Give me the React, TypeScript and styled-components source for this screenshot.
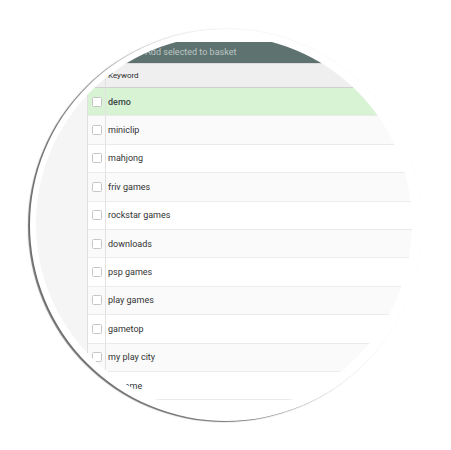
import React from "react";
import styled, { createGlobalStyle } from "styled-components";

const GlobalStyle = createGlobalStyle`
  html, body { margin: 0; padding: 0; background: #ffffff; }
  body { width: 451px; height: 450px; overflow: hidden; font-family: Roboto, "Liberation Sans", Arial, sans-serif; }
  * { box-sizing: border-box; }
`;

const Stage = styled.div`
  position: relative;
  width: 451px;
  height: 450px;
  background: #ffffff;
`;

/* the magnifier disc lying on the empty canvas */
const Disc = styled.div`
  position: absolute;
  left: 30px;
  top: 29px;
  width: 392px;
  height: 392px;
  border-radius: 50%;
  background: #ffffff;
  box-shadow: -2px 1px 1px rgba(0, 0, 0, 0.55), -1px 0 2px rgba(0, 0, 0, 0.1);
  display: flex;
`;

const Lens = styled.div`
  margin: 7px 0 0 6px;
  width: 376px;
  height: 376px;
  border-radius: 50%;
  overflow: hidden;
  background: #ffffff;
  display: flex;
  flex-direction: column;
`;

const TopGap = styled.div`
  height: 6px;
  flex: none;
  background: #ffffff;
`;

const Toolbar = styled.div`
  height: 21px;
  flex: none;
  background: #5e7270;
  color: #bcc6c5;
  font-size: 9px;
  line-height: 21px;
  padding-left: 109px;
  white-space: nowrap;
`;

const Body = styled.div`
  flex: 1;
  display: flex;
  min-height: 0;
`;

const Margin = styled.div`
  width: 51px;
  flex: none;
  background: #f5f5f5;
`;

const Table = styled.div`
  flex: 1;
  display: flex;
  flex-direction: column;
  border-left: 1px solid #e0e0e0;
  background: #ffffff;
`;

const HeadRow = styled.div`
  height: 25px;
  flex: none;
  display: grid;
  grid-template-columns: 18px 1fr;
  background: #efefef;
  border-top: 1px solid #dcdcdc;
  border-bottom: 1px solid #d0d0d0;
`;

const HeadLabel = styled.div`
  font-size: 8px;
  color: #2e2e2e;
  padding-left: 2px;
  display: flex;
  align-items: center;
`;

const Row = styled.div<{ $tone: "hit" | "odd" | "even" }>`
  height: 28.4px;
  flex: none;
  display: grid;
  grid-template-columns: 18px 1fr;
  border-bottom: 1px solid #ebebeb;
  background: ${(p) =>
    p.$tone === "hit" ? "#d8f3d4" : p.$tone === "odd" ? "#fafafa" : "#ffffff"};
`;

const CheckCell = styled.div`
  border-right: 1px solid #e2e2e2;
  display: flex;
  align-items: center;
  justify-content: center;
`;

const Box = styled.span`
  width: 10px;
  height: 10px;
  border: 1px solid #c6c6c6;
  border-radius: 1.5px;
  background: #ffffff;
`;

const Word = styled.div<{ $hit?: boolean }>`
  font-size: 9px;
  color: ${(p) => (p.$hit ? "#3a4746" : "#333333")};
  font-weight: ${(p) => (p.$hit ? 500 : 400)};
  padding-left: 2px;
  display: flex;
  align-items: center;
  white-space: nowrap;
`;

const keywords = [
  "demo",
  "miniclip",
  "mahjong",
  "friv games",
  "rockstar games",
  "downloads",
  "psp games",
  "play games",
  "gametop",
  "my play city",
  "y8 game",
];

export default function App() {
  return (
    <>
      <GlobalStyle />
      <Stage>
        <Disc>
          <Lens>
            <TopGap />
            <Toolbar>Add selected to basket</Toolbar>
            <Body>
              <Margin />
              <Table>
                <HeadRow>
                  <CheckCell />
                  <HeadLabel>Keyword</HeadLabel>
                </HeadRow>
                {keywords.map((k, i) => (
                  <Row key={k} $tone={i === 0 ? "hit" : i % 2 === 1 ? "odd" : "even"}>
                    <CheckCell>
                      <Box />
                    </CheckCell>
                    <Word $hit={i === 0}>{k}</Word>
                  </Row>
                ))}
              </Table>
            </Body>
          </Lens>
        </Disc>
      </Stage>
    </>
  );
}
